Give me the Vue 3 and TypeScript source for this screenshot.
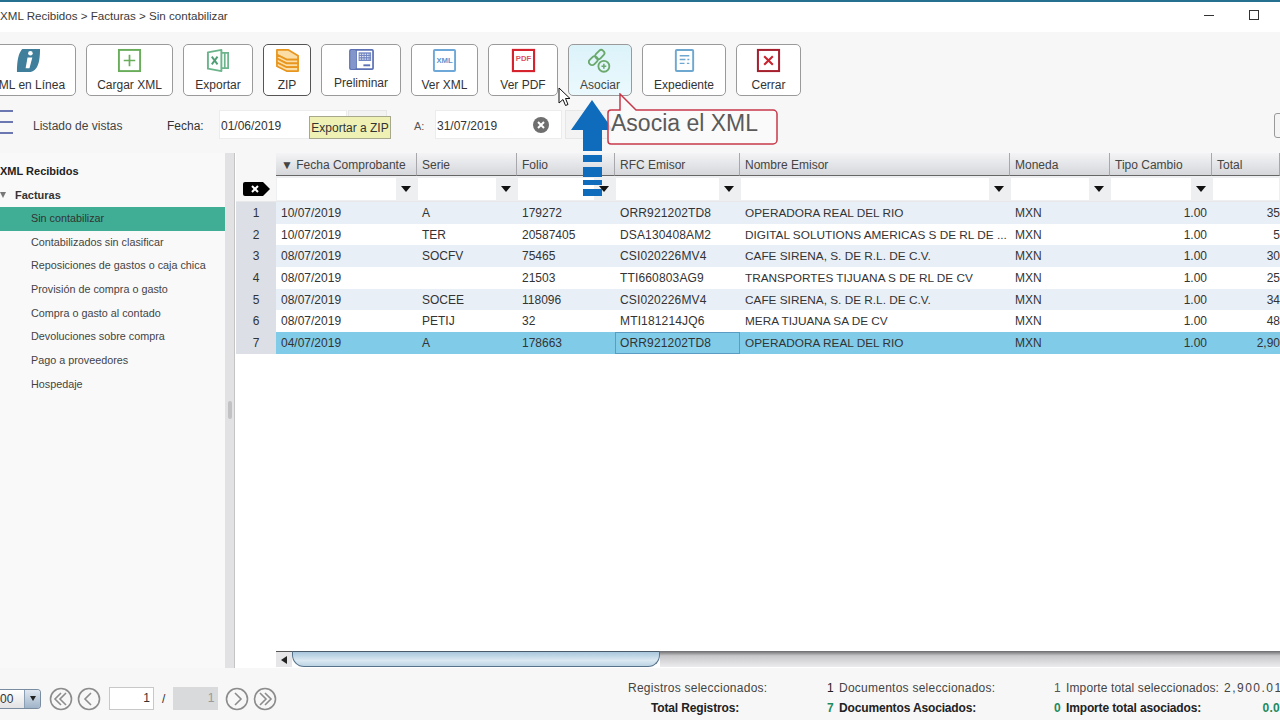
<script setup lang="ts">
interface Row { n: number; fecha: string; serie: string; folio: string; rfc: string; nombre: string; total: string }
const rows: Row[] = [
  { n: 1, fecha: '10/07/2019', serie: 'A', folio: '179272', rfc: 'ORR921202TD8', nombre: 'OPERADORA REAL DEL RIO', total: '35' },
  { n: 2, fecha: '10/07/2019', serie: 'TER', folio: '20587405', rfc: 'DSA130408AM2', nombre: 'DIGITAL SOLUTIONS AMERICAS S DE RL DE ...', total: '5' },
  { n: 3, fecha: '08/07/2019', serie: 'SOCFV', folio: '75465', rfc: 'CSI020226MV4', nombre: 'CAFE SIRENA, S. DE R.L. DE C.V.', total: '30' },
  { n: 4, fecha: '08/07/2019', serie: '', folio: '21503', rfc: 'TTI660803AG9', nombre: 'TRANSPORTES TIJUANA S DE RL DE CV', total: '25' },
  { n: 5, fecha: '08/07/2019', serie: 'SOCEE', folio: '118096', rfc: 'CSI020226MV4', nombre: 'CAFE SIRENA, S. DE R.L. DE C.V.', total: '34' },
  { n: 6, fecha: '08/07/2019', serie: 'PETIJ', folio: '32', rfc: 'MTI181214JQ6', nombre: 'MERA TIJUANA SA DE CV', total: '48' },
  { n: 7, fecha: '04/07/2019', serie: 'A', folio: '178663', rfc: 'ORR921202TD8', nombre: 'OPERADORA REAL DEL RIO', total: '2,90' },
]
const headers = ['▼ Fecha Comprobante', 'Serie', 'Folio', 'RFC Emisor', 'Nombre Emisor', 'Moneda', 'Tipo Cambio', 'Total']
const navItems = ['Sin contabilizar', 'Contabilizados sin clasificar', 'Reposiciones de gastos o caja chica', 'Provisión de compra o gasto', 'Compra o gasto al contado', 'Devoluciones sobre compra', 'Pago a proveedores', 'Hospedaje']
</script>

<template>
  <div class="app">
    <header class="title">
      <span>XML Recibidos &gt; Facturas &gt; Sin contabilizar</span>
      <div class="winbtns">
        <i class="win-min"></i>
        <i class="win-max"></i>
      </div>
    </header>

    <div class="toolbar">
      <button class="tb first">
        <svg class="ic" viewBox="0 0 26 26"><path d="M7 1h18c0 9-1 16-4 20-2 3-5 4-8 4H1C1 16 2 9 4 5c1-2 2-4 3-4z" fill="#3f7f9b"/><circle cx="15" cy="5.5" r="2.4" fill="#fff"/><path d="M12 10h5l-3 11h-4z" fill="#fff"/></svg>
        <span>XML en Línea</span>
      </button>
      <button class="tb w87">
        <svg class="ic" viewBox="0 0 26 26"><rect x="2" y="2" width="22" height="22" fill="none" stroke="#69ad5b" stroke-width="2"/><path d="M13 7v12M7 13h12" stroke="#69ad5b" stroke-width="1.8"/></svg>
        <span>Cargar XML</span>
      </button>
      <button class="tb w70">
        <svg class="ic" viewBox="0 0 26 26"><path d="M2 4.5L16 2v22L2 21.5z" fill="#fff" stroke="#6cb58c" stroke-width="2" stroke-linejoin="round"/><path d="M16 5h7v16h-7M19.5 5v16" fill="none" stroke="#6cb58c" stroke-width="1.8"/><path d="M6 9l6 8M12 9l-6 8" stroke="#4f9f75" stroke-width="2"/></svg>
        <span>Exportar</span>
      </button>
      <button class="tb w48 focus">
        <svg class="ic" viewBox="0 0 26 26"><g fill="#fbdda6" stroke="#e8961e" stroke-width="1.8" stroke-linejoin="round"><path d="M2 2h12l10 6v4H12L2 7z"/><path d="M2 7l10 5h12v4H12L2 11z"/><path d="M2 11l10 5h12v4H12L2 15z"/><path d="M2 15l10 5h12v4H12L2 19z"/></g></svg>
        <span>ZIP</span>
      </button>
      <button class="tb w80 prelim">
        <svg class="ic" viewBox="0 0 26 26"><rect x="1" y="2" width="24" height="20" rx="1" fill="#fff" stroke="#5c72b4" stroke-width="1.8"/><rect x="2" y="3" width="5" height="18" fill="#8296cc"/><path d="M7.5 2v20" stroke="#5c72b4" stroke-width="1.4"/><rect x="10" y="4.5" width="13" height="9" fill="#7186c2"/><path d="M11 6.5h11M11 9h11M11 11.5h11" stroke="#fff" stroke-width="1" stroke-dasharray="1.6 1"/><path d="M15 18h7" stroke="#5c72b4" stroke-width="2"/></svg>
        <span>Preliminar</span>
      </button>
      <button class="tb w67">
        <svg class="ic" viewBox="0 0 26 26"><rect x="2" y="2" width="22" height="22" rx="1" fill="#fff" stroke="#6ea8d8" stroke-width="2"/><text x="13" y="16" class="mini" fill="#5f94cc">XML</text></svg>
        <span>Ver XML</span>
      </button>
      <button class="tb w70">
        <svg class="ic" viewBox="0 0 26 26"><rect x="2" y="2" width="22" height="22" fill="#fff" stroke="#d5222c" stroke-width="2.2"/><text x="13" y="13" class="mini" fill="#e0505c">PDF</text></svg>
        <span>Ver PDF</span>
      </button>
      <button class="tb w64 active">
        <svg class="ic" viewBox="0 0 26 26"><g fill="none" stroke="#6aa86c" stroke-width="1.9"><rect x="0.5" y="10" width="10" height="6.5" rx="3" transform="rotate(-45 5.5 13.2)"/><rect x="7" y="3.6" width="10.5" height="6.5" rx="3" transform="rotate(-45 12.2 6.8)"/><circle cx="16.5" cy="19" r="5.7"/></g><path d="M14 19h5M16.5 16.5v5" stroke="#6aa86c" stroke-width="1.6"/></svg>
        <span>Asociar</span>
      </button>
      <button class="tb w84">
        <svg class="ic" viewBox="0 0 26 26"><rect x="4" y="2" width="18" height="22" rx="1" fill="#fff" stroke="#6ea8d0" stroke-width="2"/><path d="M8 8h10M8 12h6M16 12h2M8 16h5M15.5 16h2.5" stroke="#6ea8d0" stroke-width="1.5"/></svg>
        <span>Expediente</span>
      </button>
      <button class="tb w65">
        <svg class="ic" viewBox="0 0 26 26"><rect x="2" y="2" width="22" height="22" fill="#fff" stroke="#a51f2d" stroke-width="2.1"/><path d="M8.5 8.5l9 9M17.5 8.5l-9 9" stroke="#c8242f" stroke-width="2.2"/></svg>
        <span>Cerrar</span>
      </button>
    </div>

    <div class="filters">
      <div class="burger"><i></i><i></i><i></i></div>
      <span class="listado">Listado de vistas</span>
      <span class="fecha">Fecha:</span>
      <div class="date d1">01/06/2019</div>
      <div class="datebtn b1"></div>
      <span class="a">A:</span>
      <div class="date d2">
        <span>31/07/2019</span>
        <svg class="clear" viewBox="0 0 16 16"><circle cx="8" cy="8" r="8" fill="#6f6f6f"/><path d="M5 5l6 6M11 5l-6 6" stroke="#fff" stroke-width="2"/></svg>
      </div>
      <div class="datebtn b2"></div>
      <div class="edgebox"></div>
    </div>

    <main class="main">
      <aside class="side">
        <div class="root-node">XML Recibidos</div>
        <div class="fact-node"><i class="tri"></i>Facturas</div>
        <div v-for="(it, i) in navItems" :key="it" class="nav" :class="{ sel: i === 0 }">{{ it }}</div>
      </aside>
      <div class="split"><i class="grip"></i></div>
      <section class="grid">
        <div class="row head">
          <div class="corner"></div>
          <div v-for="(h, i) in headers" :key="h" class="hc" :class="{ sorted: i === 0 }">{{ h }}</div>
        </div>
        <div class="row filter">
          <div class="corner">
            <svg class="tag" viewBox="0 0 27 14"><path d="M2 0h18l7 7-7 7H2a2 2 0 01-2-2V2a2 2 0 012-2z" fill="#000"/><path d="M9 4l6 6M15 4l-6 6" stroke="#fff" stroke-width="2"/></svg>
          </div>
          <div v-for="(h, i) in headers" :key="h" class="fc">
            <span class="fi"></span>
            <span v-if="i < 7" class="fb"><i></i></span>
          </div>
        </div>
        <div v-for="r in rows" :key="r.n" class="row data" :class="{ odd: r.n % 2 === 1, selrow: r.n === 7 }">
          <div class="num">{{ r.n }}</div>
          <div class="c">{{ r.fecha }}</div>
          <div class="c">{{ r.serie }}</div>
          <div class="c">{{ r.folio }}</div>
          <div class="c rfc" :class="{ focused: r.n === 7 }">{{ r.rfc }}</div>
          <div class="c nom">{{ r.nombre }}</div>
          <div class="c">MXN</div>
          <div class="c right">1.00</div>
          <div class="c edge">{{ r.total }}</div>
        </div>
        <div class="spacer"></div>
        <div class="hscroll">
          <span class="harrow"><i></i></span>
          <span class="thumb"></span>
          <span class="track"></span>
        </div>
      </section>
    </main>

    <footer class="foot">
      <div class="pager">
        <div class="select"><span>00</span><span class="selbtn"><i></i></span></div>
        <svg class="circ c1" viewBox="0 0 24 24"><circle cx="12" cy="12" r="10.5" fill="none" stroke="#8c8c8c" stroke-width="1.6"/><path d="M12 6l-6 6 6 6M17 6l-6 6 6 6" fill="none" stroke="#8c8c8c" stroke-width="1.6"/></svg>
        <svg class="circ c2" viewBox="0 0 24 24"><circle cx="12" cy="12" r="10.5" fill="none" stroke="#8c8c8c" stroke-width="1.6"/><path d="M14 6l-6 6 6 6" fill="none" stroke="#8c8c8c" stroke-width="1.6"/></svg>
        <div class="page">1</div>
        <span class="slash">/</span>
        <div class="page off">1</div>
        <svg class="circ c3" viewBox="0 0 24 24"><circle cx="12" cy="12" r="10.5" fill="none" stroke="#8c8c8c" stroke-width="1.6"/><path d="M10 6l6 6-6 6" fill="none" stroke="#8c8c8c" stroke-width="1.6"/></svg>
        <svg class="circ c4" viewBox="0 0 24 24"><circle cx="12" cy="12" r="10.5" fill="none" stroke="#8c8c8c" stroke-width="1.6"/><path d="M7 6l6 6-6 6M12 6l6 6-6 6" fill="none" stroke="#8c8c8c" stroke-width="1.6"/></svg>
      </div>
      <div class="stats">
        <span>Registros seleccionados:</span><span class="n blk">1</span><span>Documentos seleccionados:</span><span class="n">1</span><span class="imp">Importe total seleccionados:</span><span class="v">2,900.01</span>
        <b class="tr">Total Registros:</b><span class="n grn">7</span><b>Documentos Asociados:</b><span class="n grn">0</span><b>Importe total asociados:</b><span class="v grn end">0.0</span>
      </div>
    </footer>

    <div class="tooltip">Exportar a ZIP</div>

    <svg class="arrow" viewBox="0 0 44 98">
      <path d="M21 0L42 30H31V51H12V30H0z" fill="#0f6cbd"/>
      <path d="M12 55h19v7H12zM12 67h19v10H12zM12 80h19v5H12zM12 89h19v7H12z" fill="#0f6cbd"/>
    </svg>

    <div class="callout">
      <svg class="callout-bg" viewBox="0 0 172 52"><path d="M4 17H13V1L29 17H166a4 4 0 014 4V47a4 4 0 01-4 4H4a3 3 0 01-3-3V20a3 3 0 013-3z" fill="rgba(250,250,250,.85)" stroke="#c7394a" stroke-width="1.5"/></svg>
      <span>Asocia el XML</span>
    </div>

    <svg class="cursor" viewBox="0 0 13 20"><path d="M1 1v15l4-3.5 2.5 6 2.5-1-2.5-6H12z" fill="#fff" stroke="#111" stroke-width="1"/></svg>
  </div>
</template>

<style>
html, body { margin: 0; padding: 0; overflow: hidden; }
</style>

<style scoped>
.app { position: relative; width: 1280px; height: 720px; overflow: hidden; background: #f7f7f8; color: #333; font-family: "Liberation Sans", Arial, sans-serif; font-size: 12px; display: flex; flex-direction: column; border-top: 2px solid #25708e; box-sizing: border-box; }
i { display: block; font-style: normal; }

.title { height: 30px; flex: none; background: #fff; display: flex; align-items: center; justify-content: space-between; color: #3a3a3a; font-size: 11.6px; padding-bottom: 4px; box-sizing: border-box; }
.winbtns { display: flex; align-items: center; }
.win-min { width: 10px; height: 1px; background: #333; margin-right: 35px; }
.win-max { width: 8px; height: 8px; border: 1.5px solid #333; margin-right: 21px; }

.toolbar { flex: none; height: 64px; padding-top: 12px; box-sizing: border-box; display: flex; gap: 10px; margin-left: -20px; }
.tb { height: 52px; box-sizing: border-box; border: 1px solid #9a9a9a; border-radius: 5px; background: #fff; padding: 3px 0 0; margin: 0; display: flex; flex-direction: column; align-items: center; font: inherit; color: #333; }
.tb span { margin-top: 5px; line-height: 14px; white-space: nowrap; }
.ic { width: 25px; height: 25px; display: block; flex: none; }
.mini { font: bold 8px "Liberation Sans", Arial, sans-serif; text-anchor: middle; }
.first { width: 96px; }
.w87 { width: 87px; }
.w70 { width: 70px; }
.w48 { width: 48px; }
.w80 { width: 80px; }
.w67 { width: 67px; }
.w64 { width: 64px; }
.w84 { width: 84px; }
.w65 { width: 65px; }
.focus { border-color: #555; }
.prelim span { margin-top: 3px; }
.active { background: linear-gradient(#dcf3fa, #ebf9fd); color: #444; }

.filters { flex: none; height: 57px; padding-top: 14px; box-sizing: border-box; display: flex; align-items: flex-start; font-size: 12px; color: #444; }
.burger { width: 13px; height: 24px; display: flex; flex-direction: column; justify-content: space-between; }
.burger i { height: 2px; background: #6b77b0; }
.listado { width: 134px; margin-left: 20px; line-height: 32px; }
.fecha { width: 52px; line-height: 32px; color: #333; }
.a { width: 21px; margin-left: 27px; line-height: 32px; font-size: 11px; color: #555; }
.date { height: 29px; box-sizing: border-box; background: #fff; border: 1px solid #ececec; padding: 2px 0 0 1px; color: #333; display: flex; align-items: center; justify-content: space-between; }
.d1 { width: 128px; }
.d2 { width: 127px; }
.clear { width: 16px; height: 16px; margin-right: 12px; margin-top: -1px; }
.datebtn { height: 29px; box-sizing: border-box; border: 1px solid #e6e6e6; background: #f3f3f3; }
.b1 { width: 39px; margin-left: 1px; }
.b2 { width: 43px; margin-left: 3px; }
.edgebox { width: 10px; height: 23px; margin: 3px -6px 0 auto; border: 1.5px solid #999; border-radius: 3px; background: #f4f4f4; flex: none; }

.main { flex: none; height: 515px; display: flex; }
.side { width: 225px; flex: none; background: #f9f9fa; padding-top: 6px; box-sizing: border-box; font-size: 10.8px; color: #444; }
.root-node { height: 24px; line-height: 24px; font-weight: bold; font-size: 11px; color: #222; }
.fact-node { height: 24px; line-height: 24px; font-weight: bold; font-size: 11px; color: #333; padding-left: 15px; position: relative; }
.tri { position: absolute; left: 0; top: 9px; border: 3px solid transparent; border-top: 6px solid #777; border-bottom: 0; }
.nav { height: 23.7px; line-height: 23.7px; padding-left: 31px; }
.nav.sel { background: #3fae95; color: #333; }
.split { width: 10px; flex: none; background: #e2e2e4; border-right: 1px solid #c4c4c4; box-sizing: border-box; position: relative; display: flex; justify-content: center; padding-top: 248px; }
.grip { width: 4px; height: 18px; background: #c2c2c4; border-radius: 2px; }

.grid { flex: 1; min-width: 0; background: #fff; display: flex; flex-direction: column; font-size: 12px; }
.row { display: grid; grid-template-columns: 40px 141px 100px 98px 125px 270px 100px 102px 68px; margin-left: 1px; flex: none; }
.head { height: 23px; }
.head .corner { background: #f7f7f8; }
.hc { background: linear-gradient(#f4f4f6, #d5d7db); border-bottom: 1px solid #666; border-right: 1px solid #a8a8ac; box-sizing: border-box; padding-left: 5px; line-height: 24px; color: #444; white-space: nowrap; overflow: hidden; }
.hc.sorted { padding-left: 5px; }
.filter { height: 26px; background: #eeeff1; border-bottom: 1px solid #e8e8ea; box-sizing: border-box; }
.filter .corner { display: flex; align-items: center; padding-left: 7px; background: #f7f7f8; }
.tag { width: 27px; height: 14px; }
.fc { display: flex; padding: 2px 1px 1px; box-sizing: border-box; }
.fi { flex: 1; background: #fff; }
.fb { width: 20px; flex: none; display: flex; align-items: center; justify-content: center; }
.fb i { border: 5px solid transparent; border-top: 6px solid #111; border-bottom: 0; }
.data { height: 21.7px; grid-template-rows: 21.7px; line-height: 23.4px; color: #333; }
.num { background: #dcdfe5; text-align: center; color: #333; overflow: hidden; }
.c { padding-left: 5px; white-space: nowrap; overflow: hidden; box-sizing: border-box; }
.rfc { letter-spacing: .15px; }
.nom { font-size: 11.8px; }
.odd .c { background: #e9eff7; }
.right { text-align: right; padding-right: 5px; }
.edge { text-align: right; padding: 0; }
.selrow .c { background: #80cbe8; }
.c.focused { border: 1px solid #5b9cc4; line-height: 21.4px; padding-left: 4px; }
.spacer { flex: 1; }
.hscroll { height: 16px; flex: none; margin-bottom: 1px; margin-left: 41px; display: flex; }
.harrow { width: 16px; flex: none; background: #e6e6e8; border-top: 1px solid #555; box-sizing: border-box; display: flex; align-items: center; justify-content: center; }
.harrow i { border: 4px solid transparent; border-right: 6px solid #222; border-left: 0; }
.thumb { width: 368px; flex: none; box-sizing: border-box; border: 1px solid #56728a; border-top-color: #4a5a68; border-radius: 0 0 12px 12px; background: linear-gradient(#a8c6dc, #dbe9f2 60%, #bcd4e4); }
.track { flex: 1; background: linear-gradient(#6a6a6c, #c8c8ca 30%, #ececee); }

.foot { flex: 1; display: flex; position: relative; }
.pager { display: flex; align-items: center; height: 23px; margin-top: 19px; width: 628px; flex: none; }
.select { width: 41px; height: 20px; box-sizing: border-box; border: 1px solid #7a8ca0; border-left: 0; border-radius: 0 4px 4px 0; background: linear-gradient(#fff, #e2e2e4); display: flex; justify-content: space-between; line-height: 18px; font-size: 12px; color: #333; }
.selbtn { width: 15px; background: linear-gradient(#dfe7f0, #9fb3c8); display: flex; align-items: center; justify-content: center; border-left: 1px solid #8ba0b5; border-radius: 0 3px 3px 0; }
.selbtn i { border: 3.5px solid transparent; border-top: 5px solid #222; border-bottom: 0; }
.circ { width: 24px; height: 24px; flex: none; }
.c1 { margin-left: 8px; }
.c2 { margin-left: 4px; }
.c3 { margin-left: 7px; }
.c4 { margin-left: 4px; }
.page { width: 45px; height: 23px; box-sizing: border-box; border: 1px solid #c8c8c8; background: #fff; margin-left: 8px; text-align: right; padding-right: 3px; line-height: 21px; }
.page.off { background: #d8dadc; border-color: #d8dadc; color: #999; margin-left: 8px; }
.slash { margin-left: 8px; color: #333; }
.stats { display: grid; grid-template-columns: 199px 12px 215px 12px 158px 56px; grid-auto-rows: 20px; margin-top: 10px; line-height: 20px; letter-spacing: .25px; color: #444; white-space: nowrap; }
.stats b { color: #222; letter-spacing: -.15px; }
.imp { letter-spacing: .13px; }
.tr { padding-left: 23px; }
.n { color: #555; }
.blk { color: #222; }
.v { letter-spacing: 1.5px; }
.grn { color: #1e8a5c; font-weight: bold; }
.end { text-align: right; letter-spacing: .25px; }

.tooltip { position: absolute; left: 309px; top: 114px; width: 82px; height: 23px; box-sizing: border-box; background: #eff1b4; border: 1px solid #a8a88c; line-height: 22px; text-align: center; font-size: 12px; color: #333; white-space: nowrap; }
.arrow { position: absolute; left: 571px; top: 98px; width: 44px; height: 98px; }
.callout { position: absolute; left: 607px; top: 91px; width: 172px; height: 52px; }
.callout-bg { position: absolute; inset: 0; width: 100%; height: 100%; }
.callout span { position: absolute; left: 4px; top: 16px; font-size: 23px; line-height: 28px; color: #5a5a5a; white-space: nowrap; }
.cursor { position: absolute; left: 558px; top: 85px; width: 13px; height: 20px; }
</style>
